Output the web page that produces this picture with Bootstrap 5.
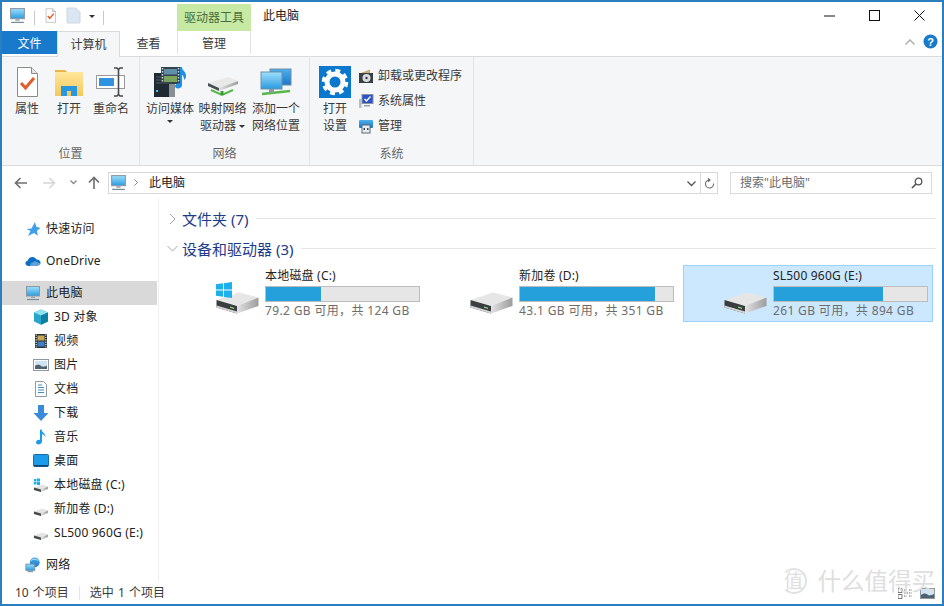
<!DOCTYPE html>
<html lang="zh-CN">

<head>
    <meta charset="UTF-8">
    <title>此电脑</title>
    <link href="https://cdn.jsdelivr.net/npm/bootstrap@5.3.3/dist/css/bootstrap.min.css" rel="stylesheet">
    <style>
        html, body { margin: 0; height: 100%; background: #fff; overflow: hidden; }
        body, .explorer { font-family: "Noto Sans", "Noto Sans CJK SC", sans-serif; font-size: 12px; color: #3a3a3a; }
        .explorer { width: 944px; height: 606px; border: 2px solid #2a7fc1; background: #fff; position: relative; }
        .svg-defs { width: 0; height: 0; position: absolute; }

        /* title bar */
        .titlebar { height: 29px; }
        .qat { width: 175px; padding-left: 7px; padding-top: 5px; }
        .qat-sep { width: 1px; height: 14px; background: #c9c9c9; }
        .tool-tab { width: 74px; height: 27px; margin-top: 2px; background: #c6e9a3; color: #4c6b3a; line-height: 27px; text-align: center; }
        .win-title { padding-left: 12px; padding-top: 5px; color: #222; }
        .win-btn { width: 45px; height: 27px; }

        /* tabs */
        .tabrow { height: 26px; border-bottom: 1px solid #dadbdc; }
        .rtab { height: 26px; line-height: 25px; text-align: center; color: #3a3a3a; }
        .rtab-file { width: 55px; height: 23px; line-height: 25px; background: #1979ca; color: #fff; }
        .rtab-on { width: 63px; height: 26px; background: #f5f6f7; border: 1px solid #dadbdc; border-bottom: 0; }
        .rtab-plain { width: 57px; }
        .rtab-tool { width: 74px; height: 23px; border-left: 1px solid #e2e3e4; border-right: 1px solid #e2e3e4; border-bottom: 1px solid #fff; }

        /* ribbon */
        .ribbon { height: 109px; background: #f5f6f7; border-bottom: 1px solid #dadbdc; }
        .rgroup { border-right: 1px solid #e2e3e4; height: 100%; padding-top: 9px; }
        .rgroup-a { width: 138px; padding-left: 4px; }
        .rgroup-b { width: 170px; padding-left: 4px; }
        .rgroup-c { width: 164px; padding-left: 7px; }
        .rgroup-name { height: 16px; line-height: 16px; margin-bottom: 3px; text-align: center; color: #666; margin-top: auto; }
        .rgroup-a .rgroup-name, .rgroup-b .rgroup-name { margin-left: -4px; }
        .rgroup-c .rgroup-name { margin-left: -7px; }
        .bigbtn { text-align: center; line-height: 17px; position: relative; }
        .bigbtn svg { display: block; margin: 0 auto 2px; }
        .w42 { width: 42px; }
        .w52 { width: 52px; }
        .w53 { width: 53px; }
        .w54 { width: 54px; }
        .w36 { width: 36px; }
        .caret { display: inline-block; width: 0; height: 0; border-left: 3px solid transparent; border-right: 3px solid transparent; border-top: 3px solid #333; vertical-align: middle; }
        .caret-solo { display: block; margin: 3px auto 0; }
        .sidebtns { padding-left: 5px; margin-top: -3px; }
        .sidebtn { height: 25px; gap: 4px; color: #3a3a3a; }

        /* address bar */
        .addrrow { height: 33px; padding-top: 6px; padding-left: 4px; }
        .navbtn { height: 22px; }
        .w29 { width: 29px; }
        .w28 { width: 28px; }
        .w20 { width: 20px; }
        .w22 { width: 22px; }
        .addrbox { width: 610px; height: 22px; margin-left: 3px; border: 1px solid #d9d9d9; color: #222; }
        .addr-path { flex: 1; padding-left: 1px; gap: 5px; }
        .addr-chev { margin-left: 2px; margin-right: 6px; }
        .addr-dd { width: 18px; }
        .addr-ref { width: 17px; border-left: 1px solid #d9d9d9; height: 100%; }
        .searchbox { width: 202px; height: 22px; border: 1px solid #d9d9d9; margin-left: 12px; color: #6d6d6d; padding: 0 8px 0 9px; }

        /* panes */
        .panes { height: 384px; }
        .navpane { width: 157px; padding-top: 18px; border-right: 1px solid #efefef; letter-spacing: .2px; }
        .navitem { height: 24px; color: #222; gap: 5px; }
        .lvl1 { padding-left: 23px; margin-top: 8px; }
        .lvl1:first-child { margin-top: 0; }
        .lvl2 { padding-left: 31px; }
        .navitem-sel { background: #d9d9d9; margin-right: 1px; }
        .content { flex: 1; padding-top: 5px; }
        .grphead { height: 30px; padding-left: 8px; gap: 4px; font-size: 15px; color: #1e3a8a; padding-right: 6px; }
        .grpline { flex: 1; height: 1px; background: #e5e5e5; margin-left: 4px; }
        .tiles { padding-left: 16px; gap: 4px; margin-top: 1px; }
        .tile { width: 250px; height: 57px; border: 1px solid transparent; }
        .tile-sel { background: #cce8ff; border-color: #99d1ff; }
        .tile-ico { width: 89px; padding-left: 40px; padding-top: 26px; position: relative; }
        .tile-logo { position: absolute; left: 40px; top: 16px; }
        .tile-body { width: 155px; }
        .tile-name { line-height: 17px; height: 20px; padding-top: 1px; color: #222; letter-spacing: .2px; }
        .usebar { height: 16px; background: #e6e6e6; border: 1px solid #bcbcbc; }
        .usefill { height: 100%; background: #26a0da; }
        .tile-cap { color: #6d6d6d; line-height: 17px; letter-spacing: .35px; }

        /* status */
        .statusbar { height: 22px; padding-left: 13px; padding-right: 7px; color: #3a3a3a; word-spacing: 1px; }
        .stat-sep { width: 1px; height: 14px; background: #e5e5e5; margin: 0 10px; }
        .viewbtns { gap: 7px; margin-left: auto; }

        /* watermark over the window */
        .wmark { position: absolute; right: 7px; bottom: 8px; gap: 11px; color: #dedede; font-size: 23.5px; line-height: 30px; pointer-events: none; }
        .wmark-seal { width: 26px; height: 26px; border: 2px solid #e2e2e2; border-left-color: transparent; border-radius: 50%; font-size: 19px; line-height: 22px; text-align: center; }
    </style>
</head>

<body>
    <svg class="svg-defs" xmlns="http://www.w3.org/2000/svg">
        <defs>
            <linearGradient id="gScreen" x1="0" y1="0" x2="0" y2="1"><stop offset="0" stop-color="#9fe0fb"/><stop offset="1" stop-color="#2a9be0"/></linearGradient>
            <linearGradient id="gDrive" x1="0" y1="0" x2="0" y2="1"><stop offset="0" stop-color="#f1f1f1"/><stop offset="1" stop-color="#b4b4b4"/></linearGradient>
            <linearGradient id="gSide" x1="0" y1="0" x2="1" y2="0"><stop offset="0" stop-color="#e2e2e2"/><stop offset="1" stop-color="#9d9d9d"/></linearGradient>
            <linearGradient id="gFolder" x1="0" y1="0" x2="0" y2="1"><stop offset="0" stop-color="#ffe9a0"/><stop offset="1" stop-color="#f6c85c"/></linearGradient>
            <linearGradient id="gBlue" x1="0" y1="0" x2="0" y2="1"><stop offset="0" stop-color="#4db0ee"/><stop offset="1" stop-color="#1a78c8"/></linearGradient>

            <symbol id="i-pc" viewBox="0 0 16 16">
                <rect x="1.5" y="1.5" width="13" height="9.5" fill="url(#gScreen)" stroke="#8b98a3"/>
                <path d="M6 11.5h4v1.5H6z" fill="#9aa5ae"/>
                <path d="M2 14.5h12" stroke="#7d8b96" stroke-width="1.2"/>
            </symbol>
            <symbol id="i-prop" viewBox="0 0 32 32">
                <path d="M6.5 1.5h14l6 6v23h-20z" fill="#fff" stroke="#8a8a8a"/>
                <path d="M20.5 1.5v6h6" fill="#e4e4e4" stroke="#8a8a8a"/>
                <path d="M10 17l4.5 5L23 12" fill="none" stroke="#df5f2b" stroke-width="3"/>
            </symbol>
            <symbol id="i-open" viewBox="0 0 32 32">
                <path d="M2 4h10l2 2h16v24H2z" fill="url(#gFolder)"/>
                <path d="M2 4h10l2 2H2z" fill="#e8b548"/>
                <path d="M8 30v-10h16v10h-6v-5h-4v5z" fill="#2a97dd"/>
            </symbol>
            <symbol id="i-rename" viewBox="0 0 32 32">
                <rect x="1.5" y="9.5" width="28" height="13" fill="#fff" stroke="#9a9a9a"/>
                <rect x="4" y="12" width="15" height="8" fill="#2f93e0"/>
                <path d="M19 2h3l1.500 1.500L25 2h3M23.500 3.500v25M19 30h3l1.500-1.500L25 30h3" fill="none" stroke="#4a4a4a" stroke-width="1.600"/>
            </symbol>
            <symbol id="i-media" viewBox="0 0 34 32">
                <rect x="1" y="7" width="15" height="24" fill="#1f2a33"/>
                <rect x="16" y="14" width="6" height="17" fill="#8a8f94"/>
                <path d="M3 11h10M3 14h10M3 17h10" stroke="#51606c"/>
                <rect x="3" y="24" width="2" height="2" fill="#45c3f0"/>
                <rect x="8" y="1" width="19" height="17" fill="#34424e"/>
                <rect x="11" y="3" width="13" height="5.500" fill="#5f90a8"/>
                <rect x="11" y="10" width="13" height="6" fill="#7aa35e"/>
                <path d="M9.500 2v15M25.500 2v15" stroke="#c9d2d8" stroke-dasharray="1.500 1.500" stroke-width="1.500"/>
                <path d="M27 1h2c0 4 4 4 4 9 0 2-1 3-2 4 0-3-1-5-2-5v10c0 2-2 3.500-4 3.500-2 0-3-1-3-2.500 0-2 3-3.500 5-2.500z" fill="#1e90e6"/>
            </symbol>
            <symbol id="i-mapdrive" viewBox="0 0 32 32">
                <path d="M1 17l20-6 10 4-19 7z" fill="#e9e9e9"/>
                <path d="M1 17l11 5v3L1 20z" fill="#4b4f52"/>
                <path d="M12 22l19-7v3l-19 7z" fill="url(#gSide)"/>
                <path d="M4 24l11 5 11-5" fill="none" stroke="#54b948" stroke-width="2"/>
                <path d="M15 25v4" stroke="#3f9a38" stroke-width="3"/>
            </symbol>
            <symbol id="i-addnet" viewBox="0 0 32 32">
                <rect x="10" y="3" width="21" height="16" fill="url(#gBlue)" stroke="#6e8fa8"/>
                <rect x="1" y="6" width="21" height="17" fill="url(#gScreen)" stroke="#6e8fa8"/>
                <path d="M2 28l28-3" stroke="#54b948" stroke-width="2.500"/>
                <rect x="9" y="23" width="5" height="4" fill="#8a9aa5"/>
            </symbol>
            <symbol id="i-gear" viewBox="0 0 32 32">
                <rect width="32" height="32" fill="#0b78d0"/>
                <circle cx="16" cy="16" r="8" fill="none" stroke="#fff" stroke-width="5"/>
                <circle cx="16" cy="16" r="11" fill="none" stroke="#fff" stroke-width="4.500" stroke-dasharray="4.640 4"/>
            </symbol>
            <symbol id="i-uninst" viewBox="0 0 16 16">
                <path d="M3 5l9-3.500V5z" fill="#c9ac72"/>
                <rect x="1" y="5" width="14" height="10" fill="#3a3f44"/>
                <circle cx="8.500" cy="10" r="4" fill="#d9dde0"/>
                <circle cx="8.500" cy="10" r="1.200" fill="#3a3f44"/>
            </symbol>
            <symbol id="i-sysprop" viewBox="0 0 16 16">
                <rect x="4" y="1.500" width="11" height="9" fill="#2b52c9" stroke="#8893a0"/>
                <path d="M6.500 6l2 2 4-4.500" fill="none" stroke="#fff" stroke-width="1.400"/>
                <rect x="1" y="6" width="2.500" height="9" fill="#b6bcc2"/>
                <rect x="6" y="12" width="6" height="1.500" fill="#9aa3ab"/>
            </symbol>
            <symbol id="i-manage" viewBox="0 0 16 16">
                <rect x="1" y="2" width="14" height="8" rx="1" fill="url(#gBlue)"/>
                <rect x="4" y="7" width="8" height="8" fill="#e9edf0" stroke="#5a6a76"/>
                <rect x="5.500" y="10" width="1.500" height="2" fill="#3a4650"/>
                <rect x="9" y="10" width="1.500" height="2" fill="#3a4650"/>
            </symbol>
            <symbol id="i-star" viewBox="0 0 16 16">
                <path d="M10 1l1.300 4.700L15.500 7l-3.500 2.800.8 5L9 12 3 15l2.500-5L1.500 8l5-.5z" fill="#3f9fe8"/>
            </symbol>
            <symbol id="i-cloud" viewBox="0 0 18 16">
                <path d="M4 13.500C1.500 13.500.5 12 .5 10.500 .5 9 1.500 8 3 7.800 3.500 5 6 3.500 8.500 3.500c2 0 3.500 1 4.300 2.700 2.700-.2 4.700 1.500 4.700 3.800 0 2-1.500 3.500-3.500 3.500z" fill="#0d6fc4"/>
                <path d="M6 13.500c-.5-2 1-3.500 3-3.700 1-1.800 3.500-1.800 4.500-.3 1.500-.2 3.500 1 3.500 2.500 0 1-1 1.500-2 1.500z" fill="#fff" opacity=".35"/>
            </symbol>
            <symbol id="i-3d" viewBox="0 0 16 16">
                <path d="M8 .5l7 3v9l-7 3.200-7-3.200v-9z" fill="#27a6c9"/>
                <path d="M1 3.500l7 3 7-3-7-3z" fill="#8fe3ee"/>
                <path d="M8 6.500v9.200l7-3.200v-9z" fill="#0e7fa3"/>
            </symbol>
            <symbol id="i-video" viewBox="0 0 16 16">
                <rect x="2" y="1" width="12" height="14" fill="#2b3238"/>
                <rect x="4.500" y="2.500" width="7" height="5" fill="#c7a853"/>
                <rect x="4.500" y="8.500" width="7" height="5" fill="#3f7fc4"/>
                <path d="M3.200 1.500v13M12.800 1.500v13" stroke="#dfe3e6" stroke-dasharray="1.200 1.200" stroke-width="1.200"/>
            </symbol>
            <symbol id="i-pic" viewBox="0 0 16 16">
                <rect x=".5" y="2.500" width="15" height="11" fill="#fff" stroke="#8d9aa4"/>
                <rect x="2" y="4" width="12" height="8" fill="#cfe3f2"/>
                <path d="M2 9c3-2 5-1 6 0s4 1 6-.5V12H2z" fill="#50606c"/>
            </symbol>
            <symbol id="i-doc" viewBox="0 0 16 16">
                <path d="M2.500.5h8l3 3v12h-11z" fill="#fff" stroke="#8d9aa4"/>
                <path d="M5 4h4M5 6.500h6M5 9h6M5 11.500h6" stroke="#3e8fc7"/>
            </symbol>
            <symbol id="i-down" viewBox="0 0 16 16">
                <path d="M5 0h6v8h4.500L8 16 .5 8H5z" fill="#3a8ad8"/>
            </symbol>
            <symbol id="i-music" viewBox="0 0 16 16">
                <path d="M7 .5h1.500c.3 3 4.500 4 4 8-.5-2-2-3-3.500-3.300V12.500c0 2-2 3-3.800 3C4.200 15.500 3 14.600 3 13.300 3 11.500 5.300 10.300 7 11z" fill="#1d9be6"/>
            </symbol>
            <symbol id="i-desk" viewBox="0 0 16 16">
                <rect x=".5" y="1.500" width="15" height="12" rx="1" fill="#1b9be8" stroke="#1a6aa8"/>
                <path d="M1 12h14v1.500H1z" fill="#11466f"/>
            </symbol>
            <symbol id="i-sdrive" viewBox="0 0 16 16">
                <path d="M1 10.500l8-3 6 2-7 3z" fill="#e4e4e4"/>
                <path d="M1 10.500l7 2v2.500l-7-2z" fill="#41464a"/>
                <path d="M8 12.500l7-3V12l-7 3z" fill="url(#gSide)"/>
            </symbol>
            <symbol id="i-cdrive" viewBox="0 0 16 16">
                <path d="M1 10.500l8-3 6 2-7 3z" fill="#e4e4e4"/>
                <path d="M1 10.500l7 2v2.500l-7-2z" fill="#41464a"/>
                <path d="M8 12.500l7-3V12l-7 3z" fill="url(#gSide)"/>
                <path d="M1 2h2.500v2.500H1zM4 1.500h3V4.500H4zM1 5h2.500v2.500H1zM4 5h3v3H4z" fill="#19b1ea"/>
            </symbol>
            <symbol id="i-net" viewBox="0 0 18 18">
                <circle cx="11" cy="6" r="5.500" fill="url(#gBlue)"/>
                <path d="M7 4c2-2 5-2 8 0" stroke="#cfeaf9" fill="none"/>
                <rect x="1" y="8" width="10" height="7" fill="url(#gScreen)" stroke="#6e8fa8"/>
                <path d="M3 16.500h6" stroke="#7d8b96" stroke-width="1.200"/>
            </symbol>
            <symbol id="i-bigdrive" viewBox="0 0 43 22">
                <path d="M.5 8L23 .5 42.500 5.500 21 14z" fill="#e6e6e6"/>
                <path d="M.5 8L21 14v7.500L.5 15.500z" fill="#3a3e41"/>
                <path d="M.5 13.500L21 19.500v2L.5 15.500z" fill="#d5d5d5"/>
                <path d="M21 14L42.500 5.500V14L21 21.500z" fill="url(#gSide)"/>
                <path d="M14 14.500l4 1.200v1.300L14 15.800z" fill="#8be374"/>
            </symbol>
            <symbol id="i-win" viewBox="0 0 18 18">
                <path d="M0 2.500L8 1.400V8.500H0zM9 1.300L18 0V8.500H9zM0 9.500H8V16.700L0 15.500zM9 9.500H18V18L9 16.800z" fill="#1cb0ec"/>
            </symbol>
        </defs>
    </svg>

    <div class="explorer d-flex flex-column">
        <!-- title bar -->
        <div class="titlebar d-flex">
            <div class="qat d-flex align-items-start">
                <svg width="17" height="17"><use href="#i-pc"/></svg>
                <span class="qat-sep ms-2 mt-1"></span>
                <svg class="ms-2" width="15" height="17"><use href="#i-prop"/></svg>
                <svg class="ms-2 ps-0" width="15" height="17" viewBox="0 0 15 17"><path d="M1 1h9l4 4v11H1z" fill="#dbe6f4" stroke="#cfd8e3"/></svg>
                <span class="caret ms-2 mt-2"></span>
                <span class="qat-sep ms-2 mt-1"></span>
            </div>
            <div class="tool-tab">驱动器工具</div>
            <div class="win-title">此电脑</div>
            <div class="d-flex ms-auto">
                <div class="win-btn d-flex align-items-center justify-content-center"><svg width="11" height="11"><path d="M0 6h11" stroke="#111"/></svg></div>
                <div class="win-btn d-flex align-items-center justify-content-center"><svg width="11" height="11"><rect x=".5" y=".5" width="10" height="10" fill="none" stroke="#111"/></svg></div>
                <div class="win-btn d-flex align-items-center justify-content-center"><svg width="11" height="11"><path d="M.5.5l10 10M10.500.5l-10 10" stroke="#111"/></svg></div>
            </div>
        </div>

        <!-- ribbon tabs -->
        <div class="tabrow d-flex">
            <div class="rtab rtab-file">文件</div>
            <div class="rtab rtab-on">计算机</div>
            <div class="rtab rtab-plain">查看</div>
            <div class="rtab rtab-tool">管理</div>
            <div class="d-flex ms-auto me-1 align-items-center gap-2 pb-1">
                <svg width="10" height="6"><path d="M.5 5.500L5 1l4.500 4.500" fill="none" stroke="#b0b0b0" stroke-width="1.500"/></svg>
                <svg width="15" height="15" viewBox="0 0 15 15"><circle cx="7.500" cy="7.500" r="7" fill="#1979ca"/><text x="7.500" y="11.500" text-anchor="middle" font-size="11" font-weight="700" fill="#fff" font-family="Liberation Sans, sans-serif">?</text></svg>
            </div>
        </div>

        <!-- ribbon -->
        <div class="ribbon d-flex">
            <div class="rgroup rgroup-a d-flex flex-column">
                <div class="d-flex">
                    <div class="bigbtn w42"><svg width="32" height="32"><use href="#i-prop"/></svg>属性</div>
                    <div class="bigbtn w42"><svg width="32" height="32"><use href="#i-open"/></svg>打开</div>
                    <div class="bigbtn w42"><svg width="32" height="32"><use href="#i-rename"/></svg>重命名</div>
                </div>
                <div class="rgroup-name">位置</div>
            </div>
            <div class="rgroup rgroup-b d-flex flex-column">
                <div class="d-flex">
                    <div class="bigbtn w52"><svg width="34" height="32"><use href="#i-media"/></svg>访问媒体<span class="caret caret-solo"></span></div>
                    <div class="bigbtn w53"><svg width="32" height="32"><use href="#i-mapdrive"/></svg>映射网络<br>驱动器 <span class="caret"></span></div>
                    <div class="bigbtn w54"><svg width="32" height="32"><use href="#i-addnet"/></svg>添加一个<br>网络位置</div>
                </div>
                <div class="rgroup-name">网络</div>
            </div>
            <div class="rgroup rgroup-c d-flex flex-column">
                <div class="d-flex">
                    <div class="bigbtn w36"><svg width="32" height="32"><use href="#i-gear"/></svg>打开<br>设置</div>
                    <div class="sidebtns">
                        <div class="sidebtn d-flex align-items-center"><svg width="16" height="16"><use href="#i-uninst"/></svg>卸载或更改程序</div>
                        <div class="sidebtn d-flex align-items-center"><svg width="16" height="16"><use href="#i-sysprop"/></svg>系统属性</div>
                        <div class="sidebtn d-flex align-items-center"><svg width="16" height="16"><use href="#i-manage"/></svg>管理</div>
                    </div>
                </div>
                <div class="rgroup-name">系统</div>
            </div>
        </div>

        <!-- address bar -->
        <div class="addrrow d-flex">
            <div class="navbtn w29 d-flex align-items-center justify-content-center"><svg width="14" height="12"><path d="M13 6H2M6.500 1L1.500 6l5 5" fill="none" stroke="#6d6d6d" stroke-width="1.600"/></svg></div>
            <div class="navbtn w28 d-flex align-items-center justify-content-center"><svg width="14" height="12"><path d="M1 6h11M7.500 1l5 5-5 5" fill="none" stroke="#d6d6d6" stroke-width="1.600"/></svg></div>
            <div class="navbtn w20 d-flex align-items-center justify-content-center"><svg width="7" height="5"><path d="M.5.5L3.500 3.500 6.500.5" fill="none" stroke="#8a8a8a" stroke-width="1.300"/></svg></div>
            <div class="navbtn w22 d-flex align-items-center justify-content-center"><svg width="12" height="14"><path d="M6 13V2M1 6.500L6 1.500l5 5" fill="none" stroke="#6d6d6d" stroke-width="1.600"/></svg></div>
            <div class="addrbox d-flex align-items-center">
                <div class="addr-path d-flex align-items-center">
                    <svg width="17" height="17"><use href="#i-pc"/></svg>
                    <svg class="addr-chev" width="4" height="7"><path d="M.5.5l3 3-3 3" fill="none" stroke="#8a8a8a"/></svg>
                    <span>此电脑</span>
                </div>
                <div class="addr-dd text-center"><svg width="9" height="6"><path d="M.5.500l4 4 4-4" fill="none" stroke="#555" stroke-width="1.300"/></svg></div>
                <div class="addr-ref d-flex align-items-center justify-content-center"><svg width="11" height="12" viewBox="0 0 11 12"><path d="M4 1.500L6 3 4 4.800M6 3H5A4 4 0 1 0 9.500 6.500" fill="none" stroke="#666" stroke-width="1.100"/></svg></div>
            </div>
            <div class="searchbox d-flex align-items-center justify-content-between">
                <span>搜索"此电脑"</span>
                <svg width="12" height="12" viewBox="0 0 12 12"><circle cx="7.500" cy="4.500" r="3.300" fill="none" stroke="#555" stroke-width="1.300"/><path d="M5 7L1 11" stroke="#555" stroke-width="1.700"/></svg>
            </div>
        </div>

        <!-- nav + content -->
        <div class="panes d-flex">
            <div class="navpane">
                <div class="navitem lvl1 d-flex align-items-center"><svg width="16" height="16"><use href="#i-star"/></svg>快速访问</div>
                <div class="navitem lvl1 d-flex align-items-center"><svg width="16" height="16"><use href="#i-cloud"/></svg>OneDrive</div>
                <div class="navitem lvl1 navitem-sel d-flex align-items-center"><svg width="16" height="16"><use href="#i-pc"/></svg>此电脑</div>
                <div class="navitem lvl2 d-flex align-items-center"><svg width="16" height="16"><use href="#i-3d"/></svg>3D 对象</div>
                <div class="navitem lvl2 d-flex align-items-center"><svg width="16" height="16"><use href="#i-video"/></svg>视频</div>
                <div class="navitem lvl2 d-flex align-items-center"><svg width="16" height="16"><use href="#i-pic"/></svg>图片</div>
                <div class="navitem lvl2 d-flex align-items-center"><svg width="16" height="16"><use href="#i-doc"/></svg>文档</div>
                <div class="navitem lvl2 d-flex align-items-center"><svg width="16" height="16"><use href="#i-down"/></svg>下载</div>
                <div class="navitem lvl2 d-flex align-items-center"><svg width="16" height="16"><use href="#i-music"/></svg>音乐</div>
                <div class="navitem lvl2 d-flex align-items-center"><svg width="16" height="16"><use href="#i-desk"/></svg>桌面</div>
                <div class="navitem lvl2 d-flex align-items-center"><svg width="16" height="16"><use href="#i-cdrive"/></svg>本地磁盘 (C:)</div>
                <div class="navitem lvl2 d-flex align-items-center"><svg width="16" height="16"><use href="#i-sdrive"/></svg>新加卷 (D:)</div>
                <div class="navitem lvl2 d-flex align-items-center"><svg width="16" height="16"><use href="#i-sdrive"/></svg>SL500 960G (E:)</div>
                <div class="navitem lvl1 d-flex align-items-center"><svg width="16" height="16"><use href="#i-net"/></svg>网络</div>
            </div>
            <div class="content">
                <div class="grphead d-flex align-items-center">
                    <svg width="11" height="12"><path d="M3 1l5 5-5 5" fill="none" stroke="#a8a8a8"/></svg>
                    <span>文件夹 (7)</span><span class="grpline"></span>
                </div>
                <div class="grphead d-flex align-items-center">
                    <svg width="11" height="8"><path d="M.5 1l5 5 5-5" fill="none" stroke="#a8a8a8"/></svg>
                    <span>设备和驱动器 (3)</span><span class="grpline"></span>
                </div>
                <div class="tiles d-flex">
                    <div class="tile d-flex">
                        <div class="tile-ico">
                            <svg class="d-block" width="43" height="22"><use href="#i-bigdrive"/></svg>
                            <svg class="tile-logo" width="16" height="16"><use href="#i-win"/></svg>
                        </div>
                        <div class="tile-body">
                            <div class="tile-name">本地磁盘 (C:)</div>
                            <div class="usebar"><div class="usefill" style="width: 36%"></div></div>
                            <div class="tile-cap">79.2 GB 可用，共 124 GB</div>
                        </div>
                    </div>
                    <div class="tile d-flex">
                        <div class="tile-ico"><svg class="d-block" width="43" height="22"><use href="#i-bigdrive"/></svg></div>
                        <div class="tile-body">
                            <div class="tile-name">新加卷 (D:)</div>
                            <div class="usebar"><div class="usefill" style="width: 88%"></div></div>
                            <div class="tile-cap">43.1 GB 可用，共 351 GB</div>
                        </div>
                    </div>
                    <div class="tile tile-sel d-flex">
                        <div class="tile-ico"><svg class="d-block" width="43" height="22"><use href="#i-bigdrive"/></svg></div>
                        <div class="tile-body">
                            <div class="tile-name">SL500 960G (E:)</div>
                            <div class="usebar"><div class="usefill" style="width: 71%"></div></div>
                            <div class="tile-cap">261 GB 可用，共 894 GB</div>
                        </div>
                    </div>
                </div>
            </div>
        </div>

        <!-- status bar -->
        <div class="statusbar d-flex align-items-center">
            <span>10 个项目</span><span class="stat-sep"></span><span>选中 1 个项目</span>
            <div class="viewbtns d-flex align-items-center">
                <svg width="15" height="11" viewBox="0 0 15 11"><path d="M0 .5h4v4H0zM0 6.500h4v4H0z" fill="#fff" stroke="#777"/><path d="M6 2h3M11 2h3M6 8h3M11 8h3M6 5h8" stroke="#666" stroke-dasharray="1.500 1"/></svg>
                <svg width="15" height="11" viewBox="0 0 15 11"><rect x=".5" y=".5" width="14" height="10" fill="#cfe3f2" stroke="#8d9aa4"/><path d="M1 7c4-3 6-1 7 0s4 0 6-1v4H1z" fill="#50606c"/></svg>
            </div>
        </div>

        <div class="wmark d-flex align-items-center">
            <div class="wmark-seal">值</div>
            <div>什么值得买</div>
        </div>
    </div>

    <script src="https://cdn.jsdelivr.net/npm/bootstrap@5.3.3/dist/js/bootstrap.bundle.min.js"></script>
</body>

</html>
